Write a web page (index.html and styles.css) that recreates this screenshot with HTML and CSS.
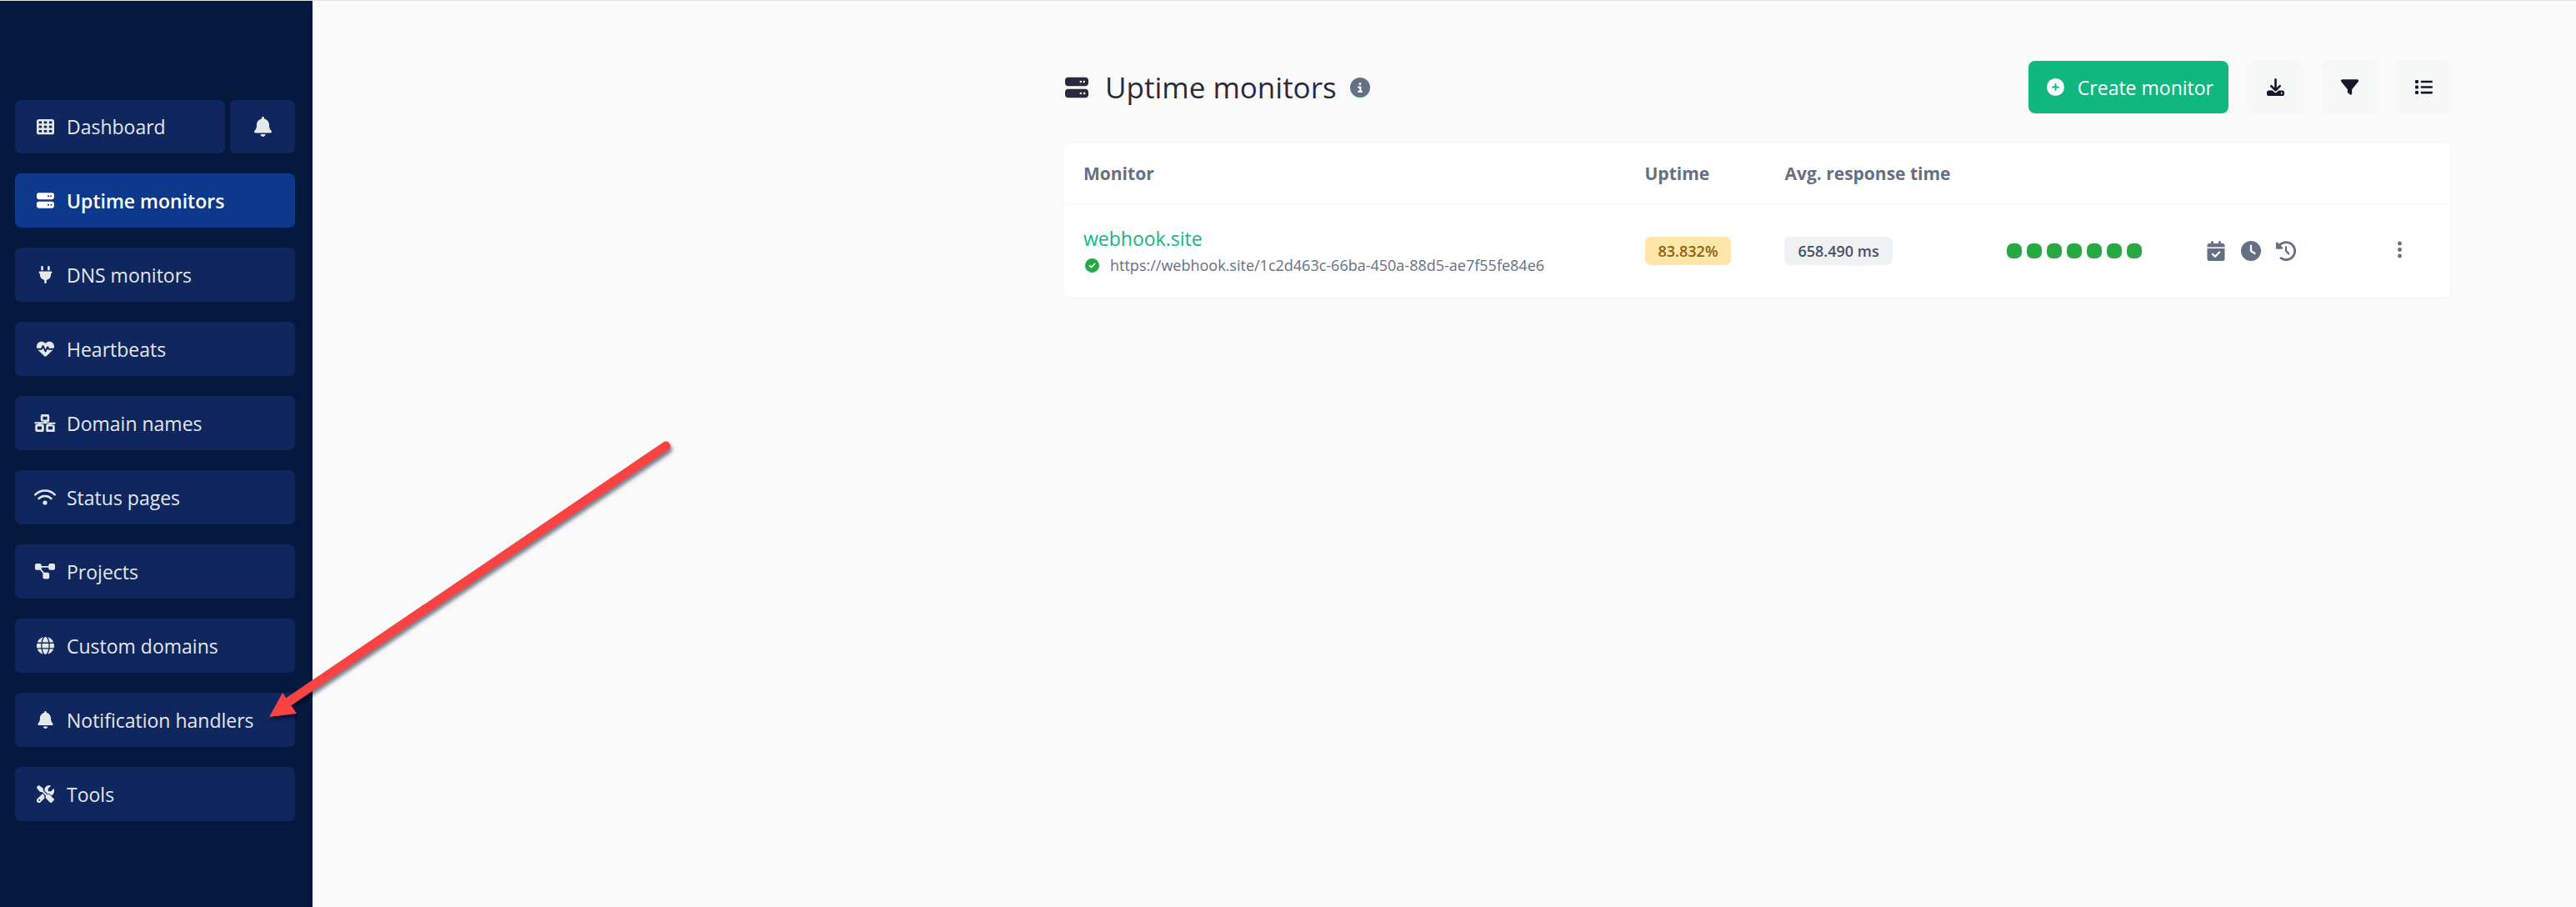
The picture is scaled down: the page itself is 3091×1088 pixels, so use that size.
FILE: index.html
```
<!DOCTYPE html>
<html lang="en">
<head>
    <meta charset="UTF-8">
    <meta name="viewport" content="width=device-width, initial-scale=1.0">
    <title>Uptime monitors</title>
    <link rel="stylesheet" href="styles.css">
</head>
<body>

    <aside class="sidebar">
        <nav class="menu">
            <div class="menu-row">
                <a href="#" class="menu-item">
                    <svg class="icon" viewBox="0 0 24 24"><path fill-rule="evenodd" d="M3 1h18a3 3 0 0 1 3 3v15a3 3 0 0 1-3 3H3a3 3 0 0 1-3-3V4a3 3 0 0 1 3-3zM3 4v3h4V4zM10 4v3h4V4zM17 4v3h4V4zM3 10v3h4v-3zM10 10v3h4v-3zM17 10v3h4v-3zM3 16v3h4v-3zM10 16v3h4v-3zM17 16v3h4v-3z"/></svg>
                    <span>Dashboard</span>
                </a>
                <a href="#" class="menu-item menu-bell" aria-label="Notifications">
                    <svg class="icon icon-bell" viewBox="0 0 448 512"><path d="M224 0c-17.700 0-32 14.300-32 32v19.200C119 66 64 130.600 64 208v18.800c0 47-17.300 92.400-48.500 127.600l-7.400 8.300c-8.400 9.400-10.400 22.900-5.300 34.400S19.400 416 32 416h384c12.600 0 24-7.400 29.200-18.900s3.100-25-5.300-34.400l-7.400-8.300C401.300 319.200 384 273.900 384 226.800V208c0-77.400-55-142-128-156.800V32c0-17.700-14.300-32-32-32zm45.300 493.300c12-12 18.700-28.300 18.700-45.300H160c0 17 6.700 33.300 18.700 45.300S207 512 224 512s33.300-6.700 45.300-18.700z"/></svg>
                </a>
            </div>
            <a href="#" class="menu-item active">
                <svg class="icon" viewBox="0 0 512 512"><path fill-rule="evenodd" d="M64 32C28.700 32 0 60.700 0 96v64c0 35.300 28.700 64 64 64h384c35.300 0 64-28.700 64-64V96c0-35.300-28.700-64-64-64H64zm280 72a24 24 0 1 1 0 48 24 24 0 1 1 0-48zm48 24a24 24 0 1 1 48 0 24 24 0 1 1-48 0zM64 288c-35.300 0-64 28.700-64 64v64c0 35.300 28.700 64 64 64h384c35.300 0 64-28.700 64-64v-64c0-35.300-28.700-64-64-64H64zm280 72a24 24 0 1 1 0 48 24 24 0 1 1 0-48zm56 24a24 24 0 1 1 48 0 24 24 0 1 1-48 0z"/></svg>
                <span>Uptime monitors</span>
            </a>
            <a href="#" class="menu-item">
                <svg class="icon" viewBox="0 0 512 512"><path d="M128 32a32 32 0 0 1 64 0v96h-64zM320 32a32 32 0 0 1 64 0v96h-64zM96 160h320a32 32 0 0 1 0 64v32c0 77-55 142-128 157v67a32 32 0 0 1-64 0v-67C151 398 96 333 96 256v-32a32 32 0 0 1 0-64z"/></svg>
                <span>DNS monitors</span>
            </a>
            <a href="#" class="menu-item">
                <svg class="icon" viewBox="0 0 512 512"><path d="M228.300 469.100 47.600 300.400c-4.200-3.900-8.200-8.100-11.900-12.400h87c22.600 0 43-13.600 51.700-34.500l10.500-25.200 49.300 109.500c3.800 8.500 12.100 14 21.400 14.100s17.800-5 22-13.300L320 253.700l1.700 3.400c9.500 19 28.900 31 50.100 31h104.500c-3.700 4.300-7.700 8.500-11.900 12.400L283.700 469.100c-7.500 7-17.400 10.900-27.700 10.900s-20.200-3.900-27.700-10.900zM503.700 240H371.800c-3 0-5.800-1.700-7.200-4.400l-23.200-46.300c-4.100-8.100-12.400-13.300-21.500-13.300s-17.400 5.100-21.500 13.300l-41.400 82.800L205.900 158.200c-3.900-8.700-12.700-14.300-22.200-14.100s-18.100 5.900-21.800 14.800l-31.800 76.300c-1.200 3-4.200 4.900-7.400 4.900H8.300C2.800 225 0 207.900 0 190.900v-5.800C0 115.200 50.500 55.600 119.400 44.100 165 36.500 211.400 51.400 244 84l12 12 12-12c32.600-32.600 79-47.500 124.600-39.900C461.500 55.600 512 115.200 512 185.100v5.800c0 17-2.800 34-8.300 49.100z"/></svg>
                <span>Heartbeats</span>
            </a>
            <a href="#" class="menu-item">
                <svg class="icon icon-wide" viewBox="0 0 640 512"><path fill-rule="evenodd" d="M256 64v96h128V64zm-16-64h160a48 48 0 0 1 48 48v128a48 48 0 0 1-48 48h-48v16h256a24 24 0 0 1 0 48H512v16h48a48 48 0 0 1 48 48v128a48 48 0 0 1-48 48H400a48 48 0 0 1-48-48V336a48 48 0 0 1 48-48h48v-16H192v16h48a48 48 0 0 1 48 48v128a48 48 0 0 1-48 48H80a48 48 0 0 1-48-48V336a48 48 0 0 1 48-48h48v-16H32a24 24 0 0 1 0-48h256v-16h-48a48 48 0 0 1-48-48V48a48 48 0 0 1 48-48zM96 352v96h128v-96zM416 352v96h128v-96z"/></svg>
                <span>Domain names</span>
            </a>
            <a href="#" class="menu-item">
                <svg class="icon icon-wide" viewBox="0 0 640 512"><path class="line" d="M32 180C190 18 450 18 608 180M136 294c106-100 262-100 368 0"/><circle cx="320" cy="416" r="64"/></svg>
                <span>Status pages</span>
            </a>
            <a href="#" class="menu-item">
                <svg class="icon icon-wide" viewBox="0 0 640 512"><path class="line line-thin" d="M120 118h400M130 120l210 260"/><rect x="24" y="22" width="192" height="192" rx="52"/><rect x="424" y="22" width="192" height="192" rx="52"/><rect x="256" y="286" width="192" height="192" rx="52"/></svg>
                <span>Projects</span>
            </a>
            <a href="#" class="menu-item">
                <svg class="icon" viewBox="0 0 512 512"><path d="M352 256c0 22.200-1.200 43.600-3.300 64H163.300a613 613 0 0 1 0-128h185.400c2.200 20.400 3.300 41.800 3.300 64zm28.800-64h123.100a256 256 0 0 1 0 128H380.800a690 690 0 0 0 0-128zm112.600-32H376.700c-10-63.900-29.800-117.400-55.300-151.600A256 256 0 0 1 493.400 160zm-149.100 0H167.700c6.100-36.400 15.500-68.600 27-94.700C218 13 242 0 256 0s38 13 61.300 65.300c11.600 26 20.900 58.200 27 94.700zm-209 0H18.600A256 256 0 0 1 190.600 8.400C165.100 42.600 145.300 96.100 135.300 160zM8.100 192h123.100a690 690 0 0 0 0 128H8.100a256 256 0 0 1 0-128zm186.600 254.600c-11.600-26-20.900-58.200-27-94.600h176.600c-6.100 36.400-15.500 68.600-27 94.600C294 499 270 512 256 512s-38-13-61.300-65.400zM135.300 352c10 63.900 29.800 117.400 55.300 151.600A256 256 0 0 1 18.600 352zm358.100 0a256 256 0 0 1-172 151.600c25.500-34.200 45.200-87.700 55.300-151.600z"/></svg>
                <span>Custom domains</span>
            </a>
            <a href="#" class="menu-item">
                <svg class="icon" viewBox="0 0 448 512"><path d="M224 0c-17.700 0-32 14.300-32 32v19.200C119 66 64 130.600 64 208v18.800c0 47-17.300 92.400-48.500 127.600l-7.400 8.300c-8.400 9.400-10.400 22.900-5.300 34.400S19.400 416 32 416h384c12.600 0 24-7.400 29.200-18.900s3.100-25-5.300-34.400l-7.400-8.300C401.300 319.200 384 273.900 384 226.800V208c0-77.400-55-142-128-156.800V32c0-17.700-14.300-32-32-32zm45.300 493.300c12-12 18.700-28.300 18.700-45.300H160c0 17 6.700 33.300 18.700 45.300S207 512 224 512s33.300-6.700 45.300-18.700z"/></svg>
                <span>Notification handlers</span>
            </a>
            <a href="#" class="menu-item">
                <svg class="icon" viewBox="0 0 512 512"><path d="M78.600 5a24 24 0 0 0-32 2l-40 40a24 24 0 0 0-2 32l80 104a24 24 0 0 0 19 9.400h54.100l109 109c-14.700 29-10 65.400 14.300 89.600l112 112a32 32 0 0 0 45.200 0l64-64a32 32 0 0 0 0-45.200l-112-112c-24.200-24.200-60.600-29-89.600-14.300l-109-109V104a24 24 0 0 0-9.400-19zM19.900 396.100a68 68 0 0 0 96.200 96.100l117.900-117.800c-10-24-13-50-8-75l-54-55zM512 144c0-10.500-1.100-20.700-3.200-30.500-2.400-11.200-16.100-14.100-24.200-6l-63.900 63.900a16 16 0 0 1-11.300 4.700H352a16 16 0 0 1-16-16v-57.400a16 16 0 0 1 4.700-11.300l63.900-63.900c8.100-8.100 5.200-21.800-6-24.200A144 144 0 0 0 224 144v9l94 94c33-4 68 7 93 32l19 19A144 144 0 0 0 512 144zM56 432a24 24 0 1 1 48 0 24 24 0 1 1-48 0z" fill-rule="evenodd"/></svg>
                <span>Tools</span>
            </a>
        </nav>
    </aside>

    <main class="content">
        <div class="container">
            <header class="page-header">
                <h1>
                    <svg class="icon icon-title" viewBox="0 0 512 512"><path fill-rule="evenodd" d="M64 32C28.700 32 0 60.700 0 96v64c0 35.300 28.700 64 64 64h384c35.300 0 64-28.700 64-64V96c0-35.300-28.700-64-64-64H64zm280 72a24 24 0 1 1 0 48 24 24 0 1 1 0-48zm48 24a24 24 0 1 1 48 0 24 24 0 1 1-48 0zM64 288c-35.300 0-64 28.700-64 64v64c0 35.300 28.700 64 64 64h384c35.300 0 64-28.700 64-64v-64c0-35.300-28.700-64-64-64H64zm280 72a24 24 0 1 1 0 48 24 24 0 1 1 0-48zm56 24a24 24 0 1 1 48 0 24 24 0 1 1-48 0z"/></svg>
                    <span>Uptime monitors</span>
                </h1>
                <svg class="icon icon-muted" viewBox="0 0 512 512"><path fill-rule="evenodd" d="M256 512A256 256 0 1 0 256 0a256 256 0 1 0 0 512zm-40-176h24v-64h-24a24 24 0 0 1 0-48h48a24 24 0 0 1 24 24v88h8a24 24 0 0 1 0 48h-80a24 24 0 0 1 0-48zm40-208a32 32 0 1 1 0 64 32 32 0 1 1 0-64z"/></svg>
                <div class="actions">
                    <button type="button" class="btn btn-primary">
                        <svg class="icon" viewBox="0 0 512 512"><path fill-rule="evenodd" d="M256 512A256 256 0 1 0 256 0a256 256 0 1 0 0 512zm-24-168v-64h-64a24 24 0 0 1 0-48h64v-64a24 24 0 0 1 48 0v64h64a24 24 0 0 1 0 48h-64v64a24 24 0 0 1-48 0z"/></svg>
                        <span>Create monitor</span>
                    </button>
                    <button type="button" class="btn btn-light" aria-label="Export">
                        <svg class="icon" viewBox="0 0 512 512"><path fill-rule="evenodd" d="M288 32a32 32 0 0 0-64 0v242.700l-73.400-73.300a32 32 0 0 0-45.200 45.200l128 128a32 32 0 0 0 45.200 0l128-128a32 32 0 0 0-45.200-45.200L288 274.700zM64 352a64 64 0 0 0-64 64v32a64 64 0 0 0 64 64h384a64 64 0 0 0 64-64v-32a64 64 0 0 0-64-64H346.500l-45.200 45.300a64 64 0 0 1-90.600 0L165.500 352zm368 56a24 24 0 1 1 0 48 24 24 0 1 1 0-48z"/></svg>
                    </button>
                    <button type="button" class="btn btn-light" aria-label="Filters">
                        <svg class="icon" viewBox="0 0 512 512"><path d="M3.900 54.900A40 40 0 0 1 40 32h432a40 40 0 0 1 31 65.300L320 320.900V448a32 32 0 0 1-51.200 25.600l-64-48A32 32 0 0 1 192 400v-79.100L9 97.300a40 40 0 0 1-5.100-42.400z"/></svg>
                    </button>
                    <button type="button" class="btn btn-light" aria-label="Bulk actions">
                        <svg class="icon" viewBox="0 0 512 512"><rect x="0" y="48" width="96" height="96" rx="24"/><rect x="0" y="208" width="96" height="96" rx="24"/><rect x="0" y="368" width="96" height="96" rx="24"/><rect x="160" y="64" width="352" height="64" rx="32"/><rect x="160" y="224" width="352" height="64" rx="32"/><rect x="160" y="384" width="352" height="64" rx="32"/></svg>
                    </button>
                </div>
            </header>

            <div class="card">
                <table class="monitors">
                    <thead>
                        <tr>
                            <th class="col-monitor">Monitor</th>
                            <th class="col-uptime">Uptime</th>
                            <th class="col-response">Avg. response time</th>
                            <th class="col-checks"></th>
                            <th class="col-info"></th>
                            <th class="col-menu"></th>
                        </tr>
                    </thead>
                    <tbody>
                        <tr>
                            <td>
                                <a href="#" class="monitor-name">webhook.site</a>
                                <div class="monitor-url">
                                    <svg class="icon icon-check" viewBox="0 0 512 512"><path fill-rule="evenodd" d="M256 512A256 256 0 1 0 256 0a256 256 0 1 0 0 512zm113-303L241 337a24 24 0 0 1-34 0l-64-64a24 24 0 0 1 34-34l47 47 111-111a24 24 0 0 1 34 34z"/></svg>
                                    <span>https://webhook.site/1c2d463c-66ba-450a-88d5-ae7f55fe84e6</span>
                                </div>
                            </td>
                            <td><span class="badge badge-warning">83.832%</span></td>
                            <td><span class="badge badge-light">658.490 ms</span></td>
                            <td>
                                <div class="checks">
                                    <i></i><i></i><i></i><i></i><i></i><i></i><i></i>
                                </div>
                            </td>
                            <td>
                                <div class="infos">
                                    <svg class="icon" viewBox="0 0 512 512"><path fill-rule="evenodd" d="M160 0a32 32 0 0 1 32 32v32h128V32a32 32 0 0 1 64 0v32h48a48 48 0 0 1 48 48v48H32v-48a48 48 0 0 1 48-48h48V32a32 32 0 0 1 32-32zM32 192h448v272a48 48 0 0 1-48 48H80a48 48 0 0 1-48-48zm329 113a24 24 0 0 0-34-34l-95 95-47-47a24 24 0 0 0-34 34l64 64a24 24 0 0 0 34 0z"/></svg>
                                    <svg class="icon" viewBox="0 0 512 512"><path fill-rule="evenodd" d="M256 0a256 256 0 1 1 0 512 256 256 0 1 1 0-512zm-24 120v136c0 8 4 15.500 10.700 20l96 64a24 24 0 0 0 26.600-40L280 243.200V120a24 24 0 0 0-48 0z"/></svg>
                                    <svg class="icon" viewBox="0 0 512 512"><path class="line" d="M72 135A224 224 0 1 1 128 440"/><path d="M0 56a24 24 0 0 1 41-17l128 128a24 24 0 0 1-17 41H24a24 24 0 0 1-24-24z"/><path class="line line-thin" d="M256 152v104l72 72"/></svg>
                                </div>
                            </td>
                            <td>
                                <button type="button" class="btn-menu" aria-label="More">
                                    <svg class="icon" viewBox="0 0 512 512"><circle cx="256" cy="72" r="60"/><circle cx="256" cy="256" r="60"/><circle cx="256" cy="440" r="60"/></svg>
                                </button>
                            </td>
                        </tr>
                    </tbody>
                </table>
            </div>
        </div>
    </main>

    <!-- arrow pointing at "Notification handlers" -->
    <svg class="arrow" viewBox="0 0 500 350">
        <path class="arrow-shaft" d="M490 15L37 322"/>
        <path class="arrow-head" d="M14 340L30 311L47 336z"/>
    </svg>

</body>
</html>
```
FILE: styles.css
```
* { box-sizing: border-box; }
body { margin: 0; min-height: 100vh; display: flex; font-family: "Open Sans", "Noto Sans", sans-serif; font-size: 23px; line-height: 32px; color: #2a2a3c; background: #fafafa; border-top: 1px solid #e2e5dc; }
a { text-decoration: none; }

.icon { width: 21px; height: 21px; fill: currentColor; flex: none; display: block; }
.line { fill: none; stroke: currentColor; stroke-width: 60; stroke-linecap: round; stroke-linejoin: round; }
.line-thin { stroke-width: 46; }

/* Sidebar */
.sidebar { width: 375px; flex: none; padding: 119px 21px 0 18px; background: #04193d; }
.menu { display: flex; flex-direction: column; gap: 24px; }
.menu-row { display: flex; gap: 6px; }
.menu-row .menu-item { height: 64px; flex: 1; }
.menu-row .menu-bell { flex: none; width: 78px; padding: 0; justify-content: center; }
.menu-item { display: flex; align-items: center; gap: 15px; height: 65px; padding: 0 26px; border-radius: 7px; background: #10265e; color: #e4e8ea; }
.menu-item.active { background: #0d398c; color: #fff; font-weight: 600; }
.menu-item:hover { color: #fff; }
.icon-wide { width: 26px; margin: 0 -2px 0 -3px; }
.icon-bell { height: 24px; }

/* Content */
.content { flex: 1; padding: 72px 150px 0 24px; }
.container { max-width: 1665px; margin-left: auto; }
.page-header { display: flex; align-items: center; gap: 16px; margin-bottom: 35px; }
h1 { display: flex; align-items: center; gap: 20px; margin: 0; padding-left: 2px; font-size: 35px; font-weight: 500; line-height: 48px; }
.icon-title { width: 28px; height: 28px; }
.icon-muted { width: 24px; height: 24px; color: #667085; }
.actions { display: flex; gap: 23px; margin-left: auto; }
.btn { display: flex; align-items: center; justify-content: center; height: 63px; border: none; border-radius: 8px; font: inherit; cursor: pointer; }
.btn-primary { gap: 16px; padding: 0 18px 0 22px; background: #10b880; color: #fff; }
.btn-light { width: 66px; background: #f6f7f7; color: #14182c; }

.card { background: #fff; border: 1px solid #f7f7f7; border-radius: 8px; }
.monitors { width: 100%; table-layout: fixed; border-collapse: collapse; }
.monitors th, .monitors td { padding: 0 0 0 23px; text-align: left; }
.monitors th { height: 72px; font-size: 21px; font-weight: 700; color: #667085; border-bottom: 1px solid #f6f6f7; }
.monitors td { height: 113px; }
.col-monitor { width: 40.5%; }
.col-uptime { width: 10.1%; }
.col-response { width: 16%; }
.col-checks { width: 14.4%; }
.col-info { width: 12.1%; }

.monitor-name { display: block; padding-top: 3px; color: #10b880; }
.monitor-url { display: flex; align-items: center; gap: 13px; padding-left: 2px; font-size: 18px; color: #667085; }
.icon-check { width: 17px; height: 17px; color: #28a745; }
.badge { display: inline-block; padding: 0 16px; border-radius: 7px; font-size: 18px; font-weight: 600; line-height: 34px; }
.badge-warning { background: #ffe5a8; color: #8c630c; }
.badge-light { background: #eff2f3; color: #4a5068; }
.checks { display: flex; gap: 6px; }
.checks i { width: 18px; height: 18px; border-radius: 7px; background: #28a745; }
.infos { display: flex; gap: 18px; color: #667085; }
.infos .icon { width: 24px; height: 24px; }
.btn-menu { padding: 0 21px; border: none; background: none; color: #667085; cursor: pointer; }

/* Arrow */
.arrow { position: absolute; left: 309px; top: 520px; width: 500px; height: 350px; pointer-events: none; filter: drop-shadow(2px 4px 2px rgba(0, 0, 30, 0.5)); }
.arrow-shaft { fill: none; stroke: #f94343; stroke-width: 11; stroke-linecap: round; }
.arrow-head { fill: #f94343; }
```
